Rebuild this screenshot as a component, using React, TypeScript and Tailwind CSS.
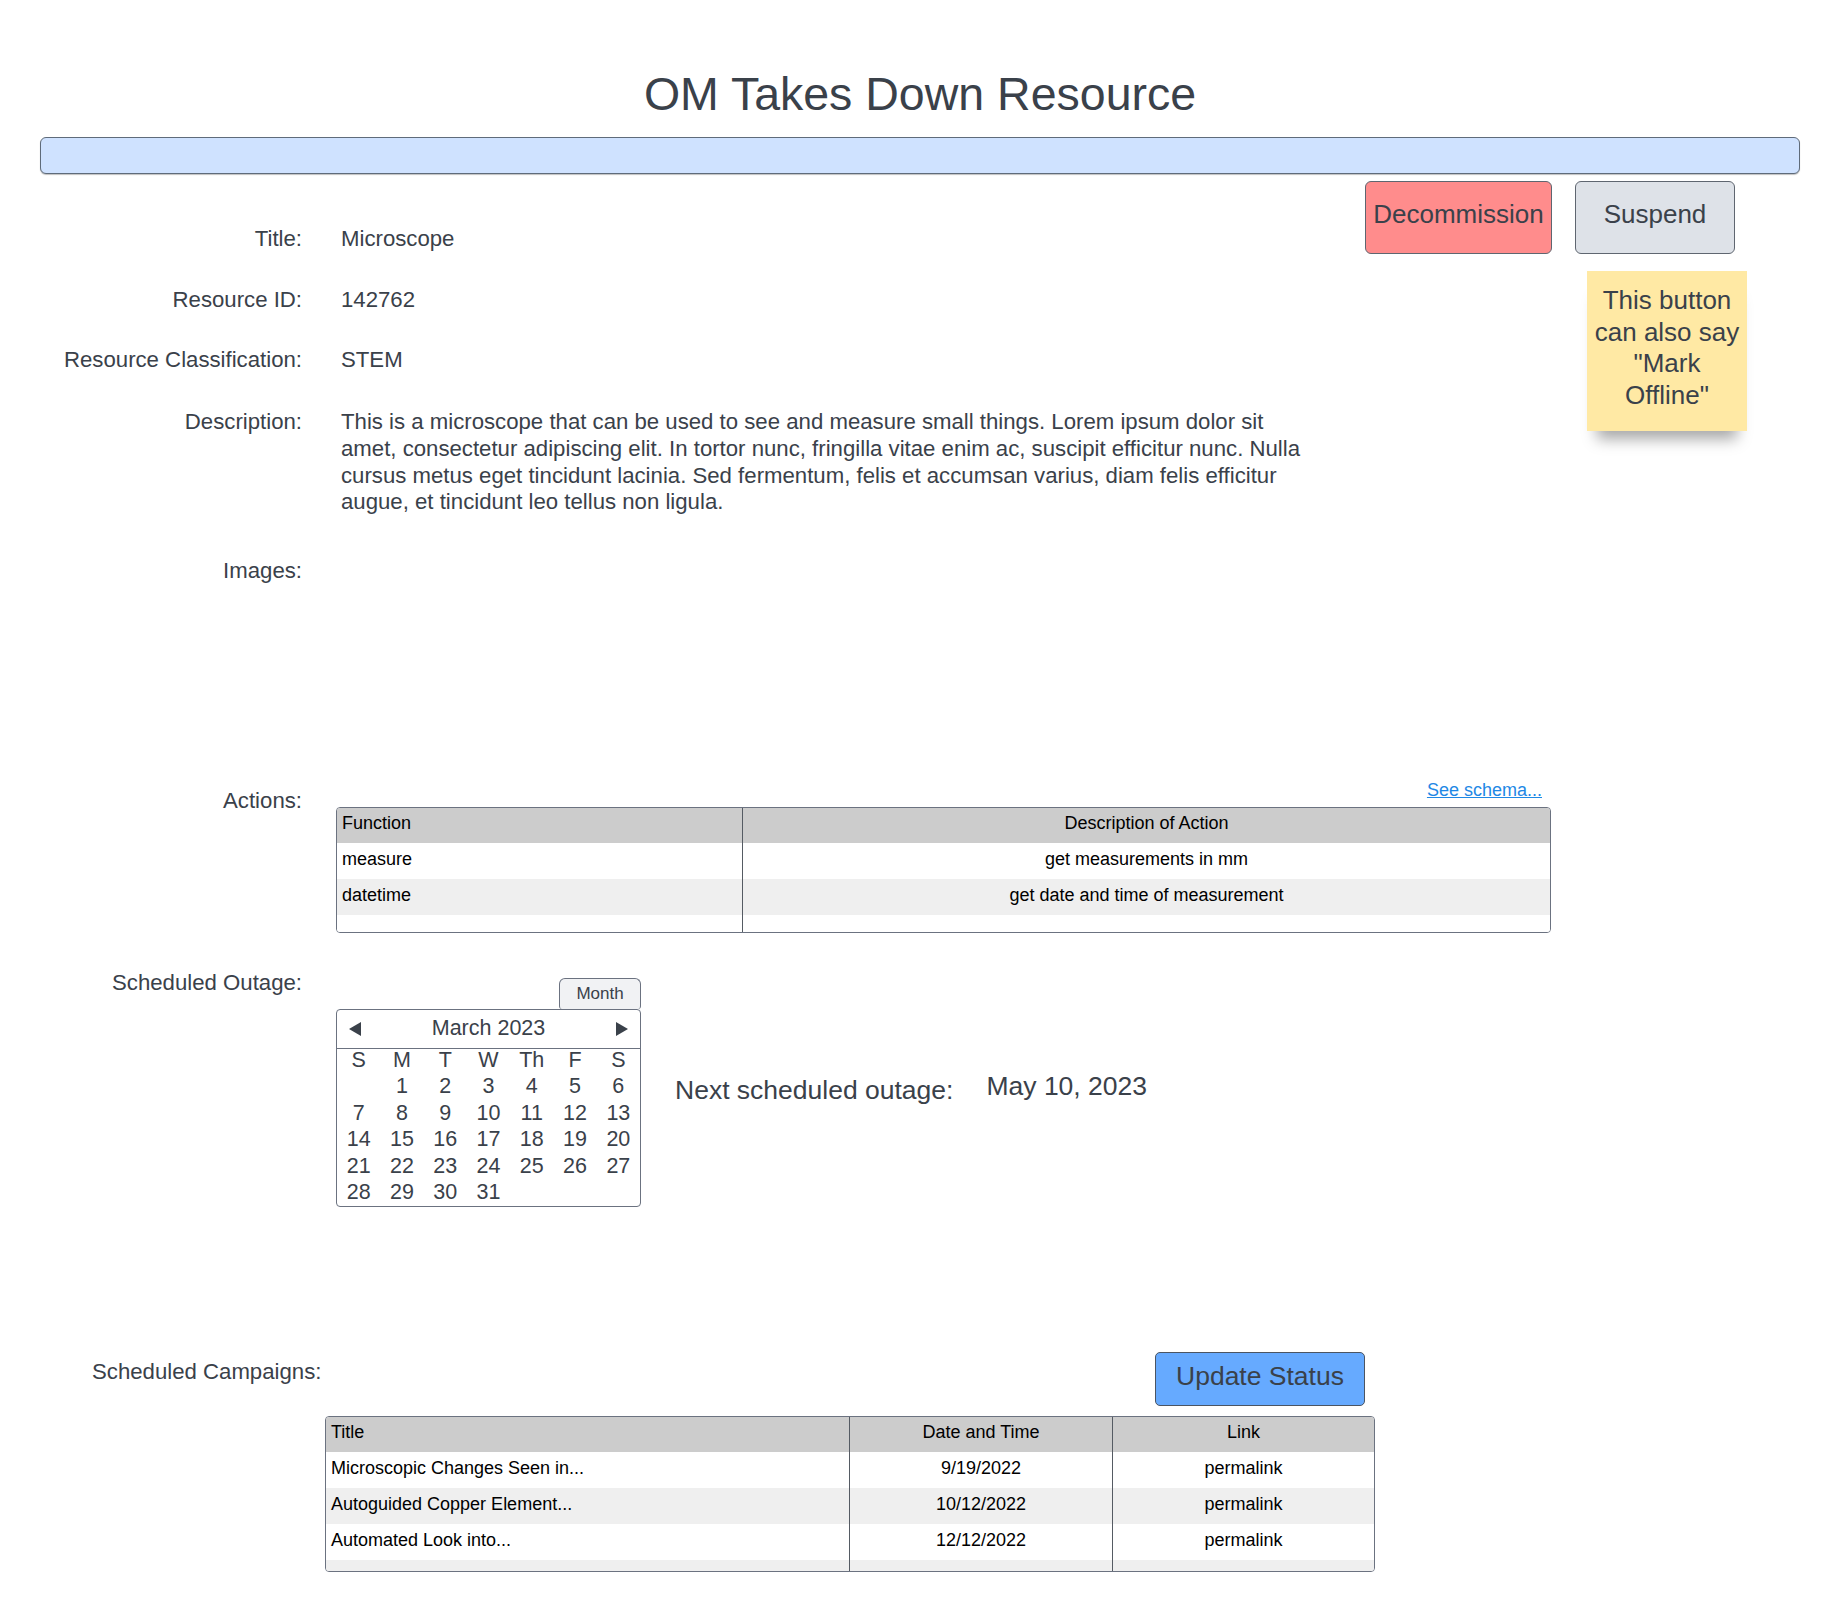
import React from 'react';

const ink = 'text-[#3a414a]';

function Label({ children, className = '' }: { children: React.ReactNode; className?: string }) {
  return (
    <div className={`w-[302px] shrink-0 text-right text-[22.2px] leading-[26.7px] ${className}`}>{children}</div>
  );
}

const days = ['S', 'M', 'T', 'W', 'Th', 'F', 'S'];
// first slot blank, then the 31 days as drawn in the mock
const dates: (number | null)[] = [null, ...Array.from({ length: 31 }, (_, i) => i + 1)];

function Calendar() {
  return (
    <div className="w-[305px] rounded-[4px] border border-[#6b7280] bg-white">
      <div className="flex h-[39px] items-center justify-between border-b border-[#6b7280] px-[11px]">
        <svg width="14" height="16" viewBox="0 0 14 16">
          <polygon points="13,1 13,15 1,8" fill="#3a414a" />
        </svg>
        <span className="text-[21.5px] leading-none">March 2023</span>
        <svg width="14" height="16" viewBox="0 0 14 16">
          <polygon points="1,1 1,15 13,8" fill="#3a414a" />
        </svg>
      </div>
      <div className="grid grid-cols-7 text-center text-[21.5px]">
        {days.map((d, i) => (
          <div key={i} className="h-[24px] leading-[22px]">{d}</div>
        ))}
        {dates.map((d, i) => (
          <div key={i} className="h-[26.6px] leading-[26.6px]">{d ?? ''}</div>
        ))}
      </div>
    </div>
  );
}

interface GridTableProps {
  cols: string;
  header: string[];
  rows: string[][];
  tail: number;
  tailShade: boolean;
}

function GridTable({ cols, header, rows, tail, tailShade }: GridTableProps) {
  const align = (ci: number) => (ci === 0 ? 'justify-start pl-[5px]' : 'justify-center');
  const divider = (ci: number, n: number) => (ci < n - 1 ? 'border-r border-[#555b63]' : '');
  return (
    <div className="overflow-hidden rounded-[4px] border border-[#6b7280] text-[18px] leading-none text-black">
      <div className={`grid ${cols} h-[35px] bg-[#cccccc]`}>
        {header.map((h, ci) => (
          <div key={ci} className={`flex items-center pb-[4px] ${align(ci)} ${divider(ci, header.length)}`}>
            {h}
          </div>
        ))}
      </div>
      {rows.map((r, ri) => (
        <div key={ri} className={`grid ${cols} h-[36px] ${ri % 2 === 1 ? 'bg-[#efefef]' : 'bg-white'}`}>
          {r.map((t, ci) => (
            <div key={ci} className={`flex items-center pb-[4px] ${align(ci)} ${divider(ci, r.length)}`}>
              {t}
            </div>
          ))}
        </div>
      ))}
      <div className={`grid ${cols} ${tailShade ? 'bg-[#efefef]' : 'bg-white'}`} style={{ height: tail }}>
        {header.map((_, ci) => (
          <div key={ci} className={divider(ci, header.length)} />
        ))}
      </div>
    </div>
  );
}

export default function App() {
  return (
    <div className={`min-h-[1613px] w-[1840px] bg-white font-['Liberation_Sans',Arial,sans-serif] ${ink}`}>
      <h1 className="pt-[67px] text-center text-[46.5px] font-normal leading-[55px]">OM Takes Down Resource</h1>
      <div className="mx-[40px] mt-[15px] h-[37px] rounded-[6px] border border-[#5f6b7a] bg-[#cfe2ff] shadow-[0_1px_1px_rgba(0,0,0,0.25)]" />

      {/* details + action buttons */}
      <div className="flex">
        <div className="flex-1 pt-[51.7px]">
          <div className="flex">
            <Label>Title:</Label>
            <div className="ml-[39px] text-[22.2px] leading-[26.7px]">Microscope</div>
          </div>
          <div className="mt-[34.3px] flex">
            <Label>Resource ID:</Label>
            <div className="ml-[39px] text-[22.2px] leading-[26.7px]">142762</div>
          </div>
          <div className="mt-[33.3px] flex">
            <Label>Resource Classification:</Label>
            <div className="ml-[39px] text-[22.2px] leading-[26.7px]">STEM</div>
          </div>
          <div className="mt-[35.8px] flex">
            <Label>Description:</Label>
            <p className="ml-[39px] w-[970px] text-[22.2px] leading-[26.7px]">
              This is a microscope that can be used to see and measure small things. Lorem ipsum dolor sit
              amet, consectetur adipiscing elit. In tortor nunc, fringilla vitae enim ac, suscipit efficitur nunc.
              Nulla cursus metus eget tincidunt lacinia. Sed fermentum, felis et accumsan varius, diam felis
              efficitur augue, et tincidunt leo tellus non ligula.
            </p>
          </div>
          <div className="mt-[41.7px] flex">
            <Label>Images:</Label>
          </div>
        </div>

        <div className="mr-[93px] w-[382px] pt-[7px]">
          <div className="flex gap-[23px]">
            <button className="h-[73px] w-[187px] whitespace-nowrap rounded-[6px] border border-[#5f6670] bg-[#ff8c8c] pb-[7px] text-[26px] leading-none">
              Decommission
            </button>
            <button className="h-[73px] w-[160px] rounded-[6px] border border-[#5f6670] bg-[#dee2e8] pb-[7px] text-[26px] leading-none">
              Suspend
            </button>
          </div>
          <div className="ml-[222px] mt-[17px] flex h-[160px] w-[160px] items-center justify-center bg-[#ffe9a4] px-[6px] pb-[6px] text-center text-[26px] leading-[31.5px] shadow-[0_18px_14px_-10px_rgba(0,0,0,0.35)]">
            This button can also say "Mark Offline"
          </div>
        </div>
      </div>

      {/* actions */}
      <div className="mt-[195.6px] flex">
        <Label className="mt-[7.7px]">Actions:</Label>
        <div className="ml-[34px] w-[1215px]">
          <div className="pr-[9px] text-right text-[18px] leading-[21.6px]">
            <a className="text-[#1e88e5] underline">See schema...</a>
          </div>
          <div className="mt-[5.4px]">
            <GridTable
              cols="grid-cols-[406px_1fr]"
              header={['Function', 'Description of Action']}
              rows={[
                ['measure', 'get measurements in mm'],
                ['datetime', 'get date and time of measurement'],
              ]}
              tail={17}
              tailShade={false}
            />
          </div>
        </div>
      </div>

      {/* scheduled outage */}
      <div className="mt-[36.7px] flex">
        <Label>Scheduled Outage:</Label>
        <div className="ml-[34px] mt-[8.3px] w-[305px]">
          <div className="flex justify-end">
            <button className="h-[31px] w-[82px] rounded-t-[6px] rounded-b-[3px] border border-b-0 border-[#6b7280] bg-[#f1f2f4] text-[17px] leading-none">
              Month
            </button>
          </div>
          <Calendar />
        </div>
        <div className="ml-[34px] mt-[105.5px] text-[26.5px] leading-[31.2px]">Next scheduled outage:</div>
        <div className="ml-[33px] mt-[101px] text-[26.5px] leading-[31.2px]">May 10, 2023</div>
      </div>

      {/* scheduled campaigns */}
      <div className="ml-[92px] mt-[145px] w-[1282px]">
        <div className="flex justify-between">
          <div className="mt-[7.2px] text-[22.2px] leading-[26.7px]">Scheduled Campaigns:</div>
          <button className="mr-[9px] h-[54px] w-[210px] rounded-[5px] border border-[#4b5563] bg-[#66aaff] pb-[5px] text-[26.5px] leading-none">
            Update Status
          </button>
        </div>
        <div className="ml-[233px] mt-[10px] w-[1050px]">
          <GridTable
            cols="grid-cols-[524px_263px_1fr]"
            header={['Title', 'Date and Time', 'Link']}
            rows={[
              ['Microscopic Changes Seen in...', '9/19/2022', 'permalink'],
              ['Autoguided Copper Element...', '10/12/2022', 'permalink'],
              ['Automated Look into...', '12/12/2022', 'permalink'],
            ]}
            tail={11}
            tailShade={true}
          />
        </div>
      </div>
    </div>
  );
}
